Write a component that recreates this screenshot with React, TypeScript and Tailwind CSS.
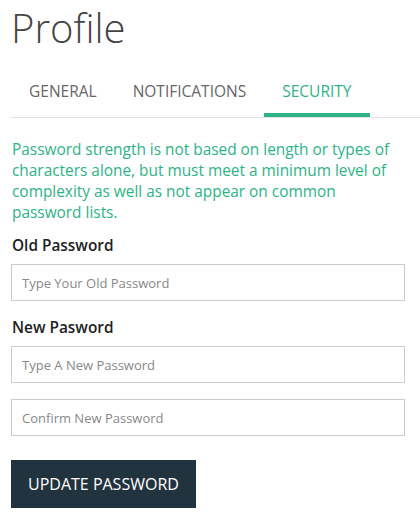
import { useState } from "react";

const tabs = ["GENERAL", "NOTIFICATIONS", "SECURITY"];

const PasswordInput = (props: { placeholder: string }) => (
  <input
    type="password"
    placeholder={props.placeholder}
    className="block w-full h-[37px] border border-[#cccccc] px-[10px] text-[13px] text-[#333] placeholder:text-[#888] outline-none"
  />
);

export default function App() {
  const [active, setActive] = useState("SECURITY");

  return (
    <div
      className="min-h-screen bg-white pl-[11px]"
      style={{ fontFamily: '"Open Sans", sans-serif' }}
    >
      <h1 className="pt-1 text-[40px] leading-[48px] font-light text-[#444]">
        Profile
      </h1>

      <nav className="mt-[17px] flex border-b border-[#e2e2e2]">
        {tabs.map((t) => (
          <button
            key={t}
            onClick={() => setActive(t)}
            className={
              "px-[18px] pt-[12px] pb-[12px] text-[15.5px] leading-[20px] border-b-4 " +
              (active === t
                ? "border-[#2eb386] text-[#2eb386]"
                : "border-transparent text-[#666]")
            }
          >
            {t}
          </button>
        ))}
      </nav>

      <div className="pr-[15px]">
        <p className="mt-[21px] pl-px text-[15.4px] leading-[21px] text-[#2eb386]">
          Password strength is not based on length or types of characters
          alone, but must meet a minimum level of complexity as well as not
          appear on common password lists.
        </p>

        <label className="mt-[12px] block pl-px text-[15.4px] leading-[21px] font-semibold text-[#222]">
          Old Password
        </label>
        <div className="mt-[8px]">
          <PasswordInput placeholder="Type Your Old Password" />
        </div>

        <label className="mt-[16px] block pl-px text-[15.4px] leading-[21px] font-semibold text-[#222]">
          New Pasword
        </label>
        <div className="mt-[8px]">
          <PasswordInput placeholder="Type A New Password" />
        </div>
        <div className="mt-[16px]">
          <PasswordInput placeholder="Confirm New Password" />
        </div>

        <button className="mt-[24px] h-[48px] px-[17px] bg-[#223340] text-[16px] text-white">
          UPDATE PASSWORD
        </button>
      </div>
    </div>
  );
}
